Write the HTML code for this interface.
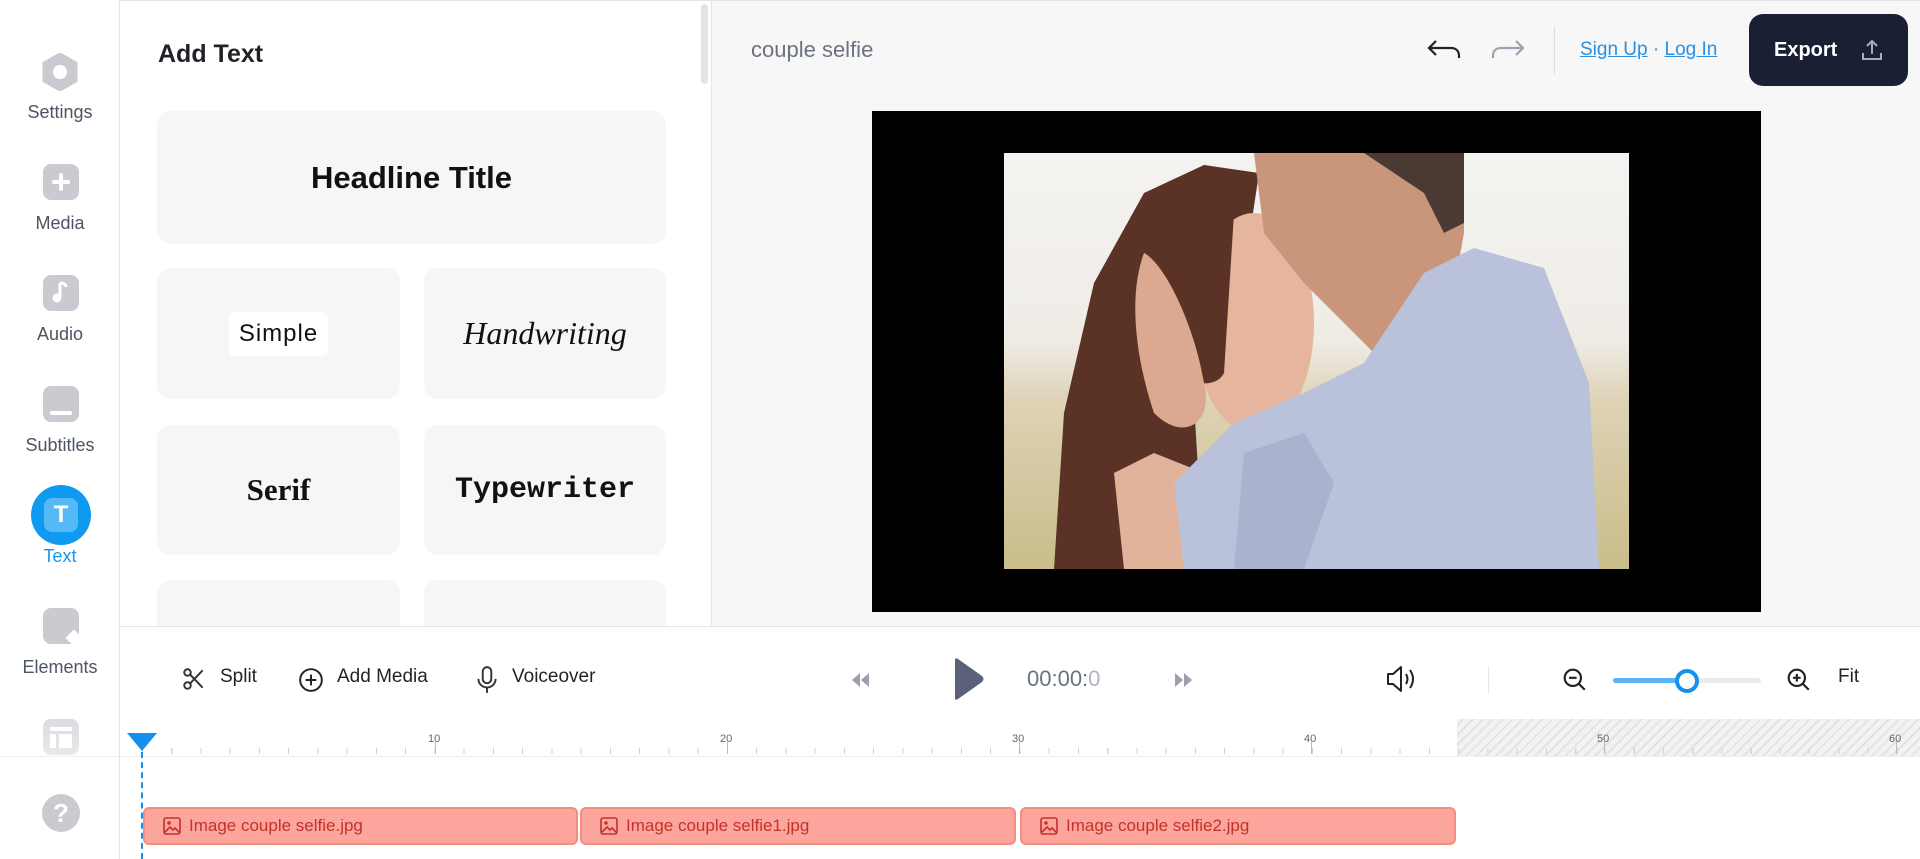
<!DOCTYPE html>
<html><head><meta charset="utf-8"><style>
*{box-sizing:border-box;margin:0;padding:0}
body{width:1920px;height:859px;overflow:hidden;background:#fff;font-family:"Liberation Sans",sans-serif;position:relative}
.a{position:absolute}
.side{left:0;top:0;width:120px;height:859px;background:#fff;border-right:1px solid #e5e5e5}
.si{position:absolute;left:0;width:120px;text-align:center;font-size:18px;color:#4b5563}
.ic{position:absolute;left:43px;width:36px;height:36px;border-radius:8px;background:#c9cbd0}
.card{position:absolute;background:#f5f6f8;border-radius:14px;display:flex;align-items:center;justify-content:center;color:#111}
.tb{position:absolute;font-size:19px;color:#1f2328;top:666px}
.clip{position:absolute;top:807px;height:38px;background:#fba59c;border:2px solid #f58c80;border-radius:6px;color:#c2332b;font-size:17px;line-height:34px;padding-left:44px}
.clip svg{position:absolute;left:18px;top:8px}
</style></head><body>
<div class="a" style="left:0;top:0;width:1920px;height:1px;background:#e5e5e5"></div>
<div class="a side"></div>
<svg class="a" style="left:41px;top:53px" width="38" height="38" viewBox="0 0 38 38"><polygon points="19,1 35,10 35,28 19,37 3,28 3,10" fill="#c9cbd0" stroke="#c9cbd0" stroke-width="3" stroke-linejoin="round"/><circle cx="19" cy="19" r="7" fill="#fff"/></svg>
<div class="si" style="top:102px">Settings</div>
<div class="ic" style="top:164px"></div><div class="a" style="left:52px;top:180px;width:18px;height:4px;background:#fff;border-radius:2px"></div><div class="a" style="left:59px;top:173px;width:4px;height:18px;background:#fff;border-radius:2px"></div>
<div class="si" style="top:213px">Media</div>
<div class="ic" style="top:275px"></div><svg class="a" style="left:49px;top:280px" width="24" height="26" viewBox="0 0 24 26"><path d="M11 3v14" stroke="#fff" stroke-width="3"/><circle cx="8" cy="18" r="4.5" fill="#fff"/><path d="M11 3c3 0 6 1 6 4" stroke="#fff" stroke-width="3" fill="none"/></svg>
<div class="si" style="top:324px">Audio</div>
<div class="ic" style="top:386px"></div><div class="a" style="left:50px;top:411px;width:22px;height:4px;background:#fff;border-radius:2px"></div>
<div class="si" style="top:435px">Subtitles</div>
<div class="a" style="left:31px;top:485px;width:60px;height:60px;border-radius:50%;background:#0e9af0"></div>
<div class="a" style="left:44px;top:498px;width:34px;height:34px;border-radius:8px;background:#55b9f7;color:#fff;font-weight:bold;font-size:24px;text-align:center;line-height:34px">T</div>
<div class="si" style="top:546px;color:#0e9af0">Text</div>
<div class="ic" style="top:608px"></div><div class="a" style="left:68px;top:632px;width:12px;height:12px;background:#fff;transform:rotate(45deg)"></div>
<div class="si" style="top:657px">Elements</div>
<div class="ic" style="top:719px;opacity:.8;border-radius:8px"></div>
<div class="a" style="left:50px;top:727px;width:22px;height:4px;background:#fff"></div><div class="a" style="left:50px;top:734px;width:6px;height:14px;background:#fff"></div><div class="a" style="left:59px;top:734px;width:13px;height:14px;background:#fff"></div>
<div class="a" style="left:0;top:700px;width:119px;height:58px;background:linear-gradient(rgba(255,255,255,0),rgba(255,255,255,.5))"></div>
<div class="a" style="left:0;top:756px;width:120px;height:1px;background:#eee"></div>
<div class="a" style="left:42px;top:794px;width:38px;height:38px;border-radius:50%;background:#c9cbd0;color:#fff;font-weight:bold;font-size:26px;text-align:center;line-height:38px">?</div>
<div class="a" style="left:711px;top:0;width:1px;height:626px;background:#e5e5e5"></div>
<div class="a" style="left:701px;top:4px;width:7px;height:80px;border-radius:4px;background:#e3e4e6"></div>
<div class="a" style="left:158px;top:40px;font-size:25px;font-weight:bold;color:#1f2328">Add Text</div>
<div class="card" style="left:157px;top:111px;width:509px;height:133px;font-size:31px;font-weight:bold">Headline Title</div>
<div class="card" style="left:157px;top:268px;width:243px;height:131px"><span style="background:#fff;border-radius:5px;padding:8px 10px;font-size:24px;letter-spacing:1px">Simple</span></div>
<div class="card" style="left:424px;top:268px;width:242px;height:131px;font-family:'Liberation Serif',serif;font-style:italic;font-size:32px">Handwriting</div>
<div class="card" style="left:157px;top:425px;width:243px;height:130px;font-family:'Liberation Serif',serif;font-weight:bold;font-size:31px">Serif</div>
<div class="card" style="left:424px;top:425px;width:242px;height:130px;font-family:'Liberation Mono',monospace;font-weight:bold;font-size:30px">Typewriter</div>
<div class="card" style="left:157px;top:580px;width:243px;height:46px;border-radius:14px 14px 0 0"></div>
<div class="card" style="left:424px;top:580px;width:242px;height:46px;border-radius:14px 14px 0 0"></div>
<div class="a" style="left:712px;top:1px;width:1208px;height:625px;background:#f7f7f8"></div>
<div class="a" style="left:751px;top:37px;font-size:22px;color:#6b7280">couple selfie</div>
<svg class="a" style="left:1426px;top:38px" width="36" height="24" viewBox="0 0 36 24"><path d="M10 3L3 10l7 7M3 10h22c5 0 8 3 8 8v2" stroke="#1f2328" stroke-width="2.2" fill="none"/></svg>
<svg class="a" style="left:1490px;top:38px" width="36" height="24" viewBox="0 0 36 24"><path d="M26 3l7 7-7 7M33 10H11c-5 0-8 3-8 8v2" stroke="#9ca3af" stroke-width="2.2" fill="none"/></svg>
<div class="a" style="left:1554px;top:26px;width:1px;height:48px;background:#ddd"></div>
<div class="a" style="left:1580px;top:39px;font-size:19px;color:#2b8fe0"><u>Sign Up</u> · <u>Log In</u></div>
<div class="a" style="left:1749px;top:14px;width:159px;height:72px;background:#1a2033;border-radius:14px;color:#fff;font-size:20px;font-weight:bold;line-height:72px;padding-left:25px">Export</div>
<svg class="a" style="left:1860px;top:38px" width="24" height="24" viewBox="0 0 24 24"><path d="M12 16V3M7 8l5-5 5 5M3 15v6h18v-6" stroke="#aab" stroke-width="2" fill="none"/></svg>
<div class="a" style="left:872px;top:111px;width:889px;height:501px;background:#000"></div>
<svg class="a" style="left:1004px;top:153px" width="625" height="416" viewBox="0 0 625 416">
<defs><linearGradient id="bg" x1="0" y1="0" x2="0" y2="1"><stop offset="0" stop-color="#f4f3f1"/><stop offset=".45" stop-color="#efece6"/><stop offset=".6" stop-color="#ddd2b4"/><stop offset="1" stop-color="#c9bd8a"/></linearGradient></defs>
<rect width="625" height="416" fill="url(#bg)"/>
<path d="M50 416L60 260 90 130 140 40 200 12 255 20 240 120 190 250 200 416Z" fill="#5a3326"/>
<path d="M120 416L110 320 150 300 200 320 240 416Z" fill="#e2b39b"/>
<ellipse cx="250" cy="170" rx="60" ry="110" fill="#e6b59d"/>
<path d="M180 60C170 100 150 150 160 200 170 230 210 240 220 220L230 60Z" fill="#5a3326"/>
<path d="M250 0H460V80L440 190 370 200 300 130 260 80Z" fill="#c9967c"/>
<path d="M360 0H460V70L440 80 420 40Z" fill="#4a3a33"/>
<path d="M140 100C160 110 190 170 200 230 210 270 180 290 150 260 130 200 125 140 140 100Z" fill="#dca88f"/>
<path d="M170 330L230 270 300 240 360 210 420 120 470 95 540 115 585 230 595 416H180Z" fill="#b9c2da"/>
<path d="M240 300L300 280 330 330 300 416H230Z" fill="#aab3cd"/>
</svg>
<div class="a" style="left:120px;top:626px;width:1800px;height:1px;background:#e5e5e5"></div>
<svg class="a" style="left:181px;top:666px" width="26" height="26" viewBox="0 0 24 24"><circle cx="6" cy="6" r="3" stroke="#333" stroke-width="1.8" fill="none"/><circle cx="6" cy="18" r="3" stroke="#333" stroke-width="1.8" fill="none"/><path d="M8.5 8L20 20M8.5 16L20 4" stroke="#333" stroke-width="1.8"/></svg>
<div class="tb" style="left:220px">Split</div>
<svg class="a" style="left:298px;top:667px" width="26" height="26" viewBox="0 0 24 24"><circle cx="12" cy="12" r="10" stroke="#222" stroke-width="1.8" fill="none"/><path d="M12 7v10M7 12h10" stroke="#222" stroke-width="1.8"/></svg>
<div class="tb" style="left:337px">Add Media</div>
<svg class="a" style="left:474px;top:665px" width="26" height="30" viewBox="0 0 24 28"><rect x="8" y="2" width="8" height="15" rx="4" stroke="#333" stroke-width="1.8" fill="none"/><path d="M4 13c0 5 4 8 8 8s8-3 8-8M12 21v5" stroke="#333" stroke-width="1.8" fill="none"/></svg>
<div class="tb" style="left:512px">Voiceover</div>
<svg class="a" style="left:849px;top:671px" width="22" height="18" viewBox="0 0 22 18"><path d="M11 2L3 9l8 7ZM20 2l-8 7 8 7Z" fill="#9aa0ad"/></svg>
<svg class="a" style="left:950px;top:656px" width="36" height="46" viewBox="0 0 36 46"><path d="M5 4Q5 1 8 3L32 20Q35 23 32 26L8 43Q5 45 5 42Z" fill="#5b6179"/></svg>
<div class="a" style="left:1027px;top:666px;font-size:22px;color:#6b7280">00:00:<span style="color:#b0b4bc">0</span></div>
<svg class="a" style="left:1173px;top:671px" width="22" height="18" viewBox="0 0 22 18"><path d="M2 2l8 7-8 7ZM11 2l8 7-8 7Z" fill="#9aa0ad"/></svg>
<svg class="a" style="left:1385px;top:664px" width="34" height="30" viewBox="0 0 34 30"><path d="M3 10h5l8-7v24l-8-7H3Z" stroke="#222" stroke-width="2" fill="none" stroke-linejoin="round"/><path d="M21 10q3 5 0 10M25 6q6 9 0 18" stroke="#222" stroke-width="2" fill="none"/></svg>
<div class="a" style="left:1488px;top:666px;width:1px;height:28px;background:#e5e5e5"></div>
<svg class="a" style="left:1562px;top:667px" width="26" height="26" viewBox="0 0 24 24"><circle cx="10" cy="10" r="7.5" stroke="#222" stroke-width="2" fill="none"/><path d="M6.5 10h7M15.5 15.5L21 21" stroke="#222" stroke-width="2"/></svg>
<div class="a" style="left:1613px;top:678px;width:148px;height:5px;background:#e9eaec;border-radius:3px"></div>
<div class="a" style="left:1613px;top:678px;width:75px;height:5px;background:#5ab4f5;border-radius:3px"></div>
<div class="a" style="left:1675px;top:669px;width:24px;height:24px;border-radius:50%;background:#fff;border:4px solid #1690ee"></div>
<svg class="a" style="left:1786px;top:667px" width="26" height="26" viewBox="0 0 24 24"><circle cx="10" cy="10" r="7.5" stroke="#222" stroke-width="2" fill="none"/><path d="M6.5 10h7M10 6.5v7M15.5 15.5L21 21" stroke="#222" stroke-width="2"/></svg>
<div class="a" style="left:1838px;top:666px;font-size:19px;color:#1f2328">Fit</div>
<div class="a" style="left:1457px;top:719px;width:463px;height:37px;background:repeating-linear-gradient(-45deg,#f2f2f2 0 5px,#e3e3e3 5px 7px)"></div>
<div class="a" style="left:142px;top:748px;width:1778px;height:6px;background:repeating-linear-gradient(90deg,#cfd2d6 0 1px,transparent 1px 29.25px)"></div>
<div class="a" style="left:120px;top:756px;width:1800px;height:1px;background:#eceef0"></div>
<div class="a" style="left:435px;top:742px;width:1px;height:12px;background:#bbb"></div>
<div class="a" style="left:727px;top:742px;width:1px;height:12px;background:#bbb"></div>
<div class="a" style="left:1019px;top:742px;width:1px;height:12px;background:#bbb"></div>
<div class="a" style="left:1311px;top:742px;width:1px;height:12px;background:#bbb"></div>
<div class="a" style="left:1604px;top:742px;width:1px;height:12px;background:#bbb"></div>
<div class="a" style="left:1896px;top:742px;width:1px;height:12px;background:#bbb"></div>
<div class="a" style="left:428px;top:733px;font-size:11px;color:#666">10</div>
<div class="a" style="left:720px;top:733px;font-size:11px;color:#666">20</div>
<div class="a" style="left:1012px;top:733px;font-size:11px;color:#666">30</div>
<div class="a" style="left:1304px;top:733px;font-size:11px;color:#666">40</div>
<div class="a" style="left:1597px;top:733px;font-size:11px;color:#666">50</div>
<div class="a" style="left:1889px;top:733px;font-size:11px;color:#666">60</div>
<svg class="a" style="left:126px;top:733px" width="32" height="20" viewBox="0 0 32 20"><path d="M1 0H31L16 18Z" fill="#1690ee"/></svg>
<div class="a" style="left:141px;top:752px;width:0;height:107px;border-left:2px dashed #1690ee"></div>
<div class="clip" style="left:143px;width:435px"><svg width="18" height="18" viewBox="0 0 18 18"><rect x="1" y="1" width="16" height="16" rx="2" stroke="#c2332b" stroke-width="1.6" fill="none"/><circle cx="6" cy="6" r="1.8" fill="#c2332b"/><path d="M2 15l5-5 3 3 2-2 5 5" stroke="#c2332b" stroke-width="1.6" fill="none"/></svg>Image couple selfie.jpg</div>
<div class="clip" style="left:580px;width:436px"><svg width="18" height="18" viewBox="0 0 18 18"><rect x="1" y="1" width="16" height="16" rx="2" stroke="#c2332b" stroke-width="1.6" fill="none"/><circle cx="6" cy="6" r="1.8" fill="#c2332b"/><path d="M2 15l5-5 3 3 2-2 5 5" stroke="#c2332b" stroke-width="1.6" fill="none"/></svg>Image couple selfie1.jpg</div>
<div class="clip" style="left:1020px;width:436px"><svg width="18" height="18" viewBox="0 0 18 18"><rect x="1" y="1" width="16" height="16" rx="2" stroke="#c2332b" stroke-width="1.6" fill="none"/><circle cx="6" cy="6" r="1.8" fill="#c2332b"/><path d="M2 15l5-5 3 3 2-2 5 5" stroke="#c2332b" stroke-width="1.6" fill="none"/></svg>Image couple selfie2.jpg</div>
</body></html>
